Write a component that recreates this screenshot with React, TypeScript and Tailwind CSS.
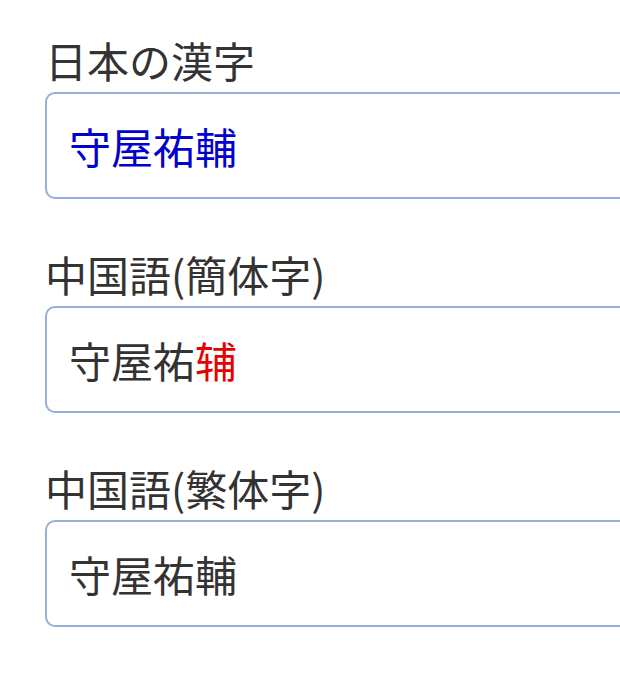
import React from 'react'

const font = { fontFamily: '"Noto Sans CJK JP", "Noto Sans", sans-serif' }

interface FieldProps {
  label: string
  children: React.ReactNode
}

function Field({ label, children }: FieldProps) {
  return (
    <div className="flex flex-col">
      <div className="text-[42px] leading-[48px] text-[#333333]">{label}</div>
      <div className="mt-[8px] flex h-[107px] w-[620px] items-center rounded-[10px] border-2 border-[#98aed6] bg-white pl-[22px] text-[42px] text-[#333333]">
        {children}
      </div>
    </div>
  )
}

export default function App() {
  return (
    <div
      className="h-[684px] w-[620px] overflow-hidden bg-white pl-[45px] pt-[36px]"
      style={font}
    >
      <div className="flex flex-col gap-[51px]">
        <Field label="日本の漢字">
          <span className="text-[#0000d0]">守屋祐輔</span>
        </Field>
        <Field label="中国語(簡体字)">
          <span>
            守屋祐<span className="text-[#e60000]">辅</span>
          </span>
        </Field>
        <Field label="中国語(繁体字)">
          <span>守屋祐輔</span>
        </Field>
      </div>
    </div>
  )
}
